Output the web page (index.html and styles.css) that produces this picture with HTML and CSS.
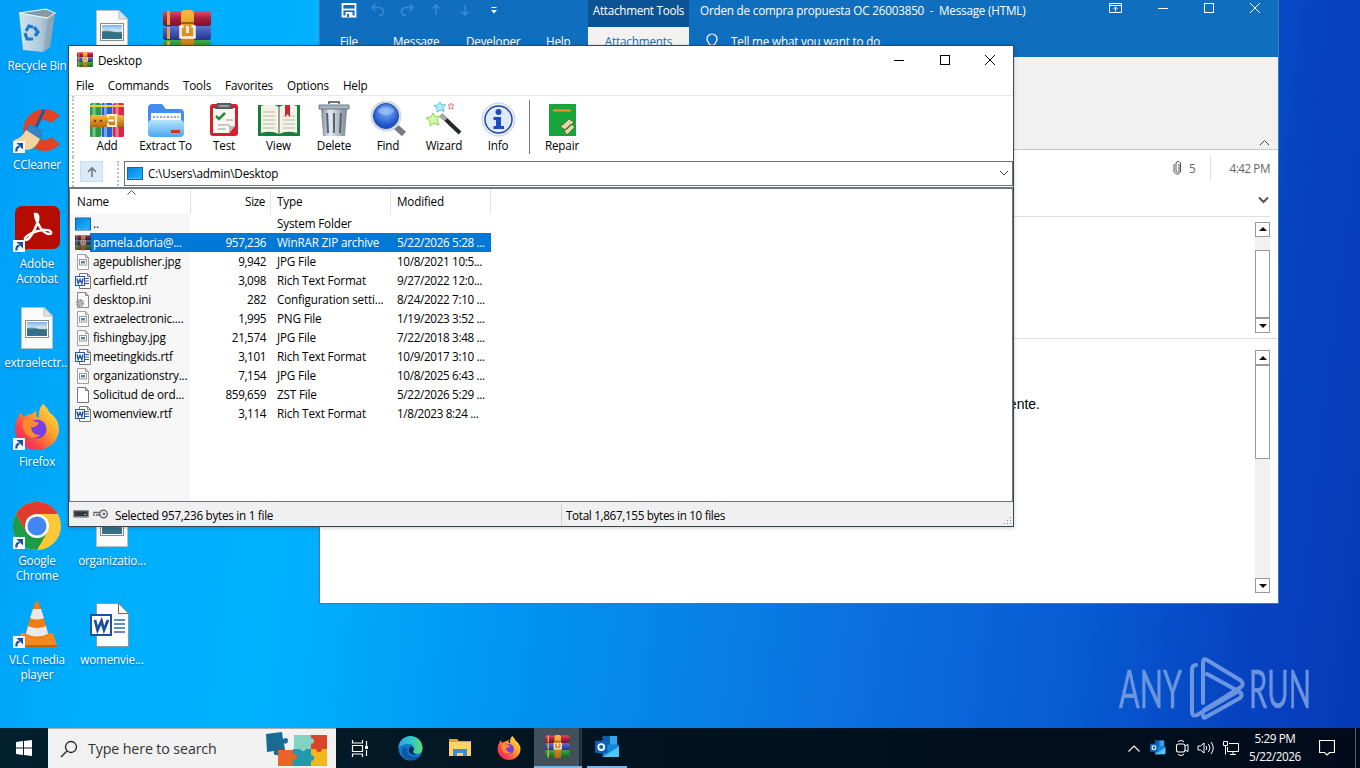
FILE: index.html
```html
<!DOCTYPE html>
<html lang="en">
<head>
<meta charset="utf-8">
<title>Desktop</title>
<link rel="stylesheet" href="styles.css">
</head>
<body>
<svg class="defs" width="0" height="0">
  <defs>
    <linearGradient id="gr" x1="0" y1="0" x2="0" y2="1"><stop offset="0" stop-color="#e0506a"/><stop offset=".5" stop-color="#a81c3c"/><stop offset="1" stop-color="#7c1230"/></linearGradient>
    <linearGradient id="gb" x1="0" y1="0" x2="0" y2="1"><stop offset="0" stop-color="#5a72d8"/><stop offset="1" stop-color="#26328a"/></linearGradient>
    <linearGradient id="gg" x1="0" y1="0" x2="0" y2="1"><stop offset="0" stop-color="#3cab48"/><stop offset="1" stop-color="#126824"/></linearGradient>
    <linearGradient id="belt" x1="0" y1="0" x2="0" y2="1"><stop offset="0" stop-color="#f8bd3c"/><stop offset="1" stop-color="#b8650f"/></linearGradient>
    <linearGradient id="folder" x1="0" y1="0" x2="0" y2="1"><stop offset="0" stop-color="#b6e4ff"/><stop offset="1" stop-color="#4aa8f2"/></linearGradient>
    <linearGradient id="metal"><stop offset="0" stop-color="#7e8a98"/><stop offset=".35" stop-color="#e6ebf0"/><stop offset="1" stop-color="#7b8795"/></linearGradient>
    <radialGradient id="lens" cx=".5" cy=".35"><stop offset="0" stop-color="#7fb2fa"/><stop offset="1" stop-color="#1c52c8"/></radialGradient>
    <linearGradient id="ff" x1="1" y1="0" x2="0" y2="1"><stop offset="0" stop-color="#fff04a"/><stop offset=".4" stop-color="#ffa22c"/><stop offset=".7" stop-color="#fb4548"/><stop offset="1" stop-color="#e01c7c"/></linearGradient>
    <linearGradient id="sea" x1="0" y1="0" x2="0" y2="1"><stop offset="0" stop-color="#78b4f0"/><stop offset=".45" stop-color="#d9edf2"/><stop offset=".55" stop-color="#3f7466"/><stop offset="1" stop-color="#417ca6"/></linearGradient>
    <linearGradient id="edge" x1="0" y1="0" x2="1" y2="0"><stop offset="0" stop-color="#2aa8e6"/><stop offset=".6" stop-color="#35c8c4"/><stop offset="1" stop-color="#62dc68"/></linearGradient>
    <linearGradient id="scr" x1="0" y1="0" x2="1" y2="1"><stop offset="0" stop-color="#0a84e0"/><stop offset="1" stop-color="#1fb4ff"/></linearGradient>
    <linearGradient id="bin" x1="0" y1="0" x2="1" y2="0"><stop offset="0" stop-color="#dce8f0"/><stop offset=".6" stop-color="#b9cbd8"/><stop offset="1" stop-color="#8aa2b4"/></linearGradient>
  </defs>
  <symbol id="rar" viewBox="0 0 48 48">
    <rect y="1" width="48" height="15" rx="2" fill="url(#gr)"/><rect y="16" width="48" height="14" rx="2" fill="url(#gb)"/><rect y="30" width="48" height="15" rx="2" fill="url(#gg)"/>
    <path d="M4 1h3v14H4zM4 17h3v12H4zM4 31h3v14H4z" fill="#e8a044"/>
    <path d="M18 4q0-4 4-4h5q4 0 4 4v42H18z" fill="url(#belt)"/><path d="M18 13h13" stroke="#8c4a08" stroke-width="1.500"/><path d="M20.500 16.500h-3v11h14v-11h-3" fill="none" stroke="#f6f0e4" stroke-width="2.500"/><path d="M24.500 16v7" stroke="#fff" stroke-width="2.500"/>
  </symbol>
  <symbol id="rarv" viewBox="0 0 34 34">
    <rect width="11" height="34" x="0" rx="1.500" fill="#2b9b40"/><rect x="11.500" width="11" height="34" rx="1.500" fill="#2564d0"/><rect x="23" width="11" height="34" rx="1.500" fill="#d92a4a"/>
    <path d="M4 0v34M15.500 0v34M27 0v34" stroke="#fff" stroke-opacity=".4" stroke-width="3"/><path d="M0 3h11M11.500 3h11M23 3h11" stroke="#f3cf34" stroke-width="2"/>
    <rect y="12" width="34" height="12" rx="2" fill="url(#belt)"/><path d="M18 15v-3h8v11h-8v-3" fill="none" stroke="#fbefd0" stroke-width="2.200"/><path d="M18 17.500h6" stroke="#fff" stroke-width="2"/><circle cx="5" cy="18" r="1.300" fill="#74400c"/><circle cx="11" cy="18" r="1.300" fill="#74400c"/>
  </symbol>
  <symbol id="pic" viewBox="0 0 32 42">
    <path d="M.5.500h22.500l8.500 8.500v32.500H.500z" fill="#fafafa" stroke="#b9bec2"/><path d="M23 .500v8.500h8.500z" fill="#dfe3e6" stroke="#b9bec2"/><rect x="4.500" y="13.500" width="23" height="17" fill="#fff" stroke="#8a8a8a"/><rect x="6" y="15" width="20" height="14" fill="url(#sea)"/><path d="M6 21q8-2 20 4v4H6z" fill="#2e6e8a" opacity=".7"/>
  </symbol>
  <symbol id="smallpic" viewBox="0 0 16 16"><path d="M2.500.500h8l3 3v12h-11z" fill="#fafafa" stroke="#a0a0a0"/><path d="M10.500.500v3h3" fill="none" stroke="#a0a0a0"/><rect x="4.500" y="5.500" width="7" height="5.500" fill="#fff" stroke="#999"/><path d="M6 7h4v2.500H6z" fill="#4d86ad"/></symbol>
  <symbol id="blank" viewBox="0 0 16 16"><path d="M2.500.500h8l3 3v12h-11z" fill="#fff" stroke="#777"/><path d="M10.500.500v3h3" fill="none" stroke="#777"/></symbol>
  <symbol id="ini" viewBox="0 0 16 16"><path d="M2.500.500h8l3 3v12h-11z" fill="#f8f8f8" stroke="#888"/><path d="M10.500.500v3h3" fill="none" stroke="#888"/><circle cx="5" cy="11" r="3" fill="#ddd" stroke="#888" stroke-width="2" stroke-dasharray="1.500 .8"/><circle cx="5" cy="11" r="1.300" fill="#fff" stroke="#888"/></symbol>
  <symbol id="smallword" viewBox="0 0 16 16"><path d="M4.500.500h8l3 3v12h-11z" fill="#fff" stroke="#777"/><path d="M12.500.500v3h3" fill="none" stroke="#777"/><path d="M10 5.500h4M10 8h4M10 10.500h4" stroke="#2a5cae"/><rect x=".5" y="3.500" width="9" height="9" fill="#fff" stroke="#2457a8"/><path d="M2 5.500l1.200 5 1.800-4 1.800 4 1.200-5" fill="none" stroke="#2457a8" stroke-width="1.500"/></symbol>
  <symbol id="word" viewBox="0 0 40 44"><path d="M6.500.500h22l10 10v33h-32z" fill="#fff" stroke="#8a9aa5"/><path d="M28.500.500v10h10" fill="none" stroke="#8a5a5a"/><path d="M24 17h11M24 21h11M24 25h11M24 29h11" stroke="#2a66b8" stroke-width="1.400"/><rect x="1" y="12" width="20" height="20" fill="#fff" stroke="#1c4f9e" stroke-width="2"/><path d="M5 17l2.500 10 4-9 2.500 9 4-10" fill="none" stroke="#1c4f9e" stroke-width="2.800"/></symbol>
  <symbol id="screen" viewBox="0 0 16 13"><rect x=".5" y=".5" width="15" height="12" fill="url(#scr)" stroke="#0a68b8"/><path d="M2 11.500h11" stroke="#8bd4ff" stroke-dasharray="1 1"/></symbol>
  <symbol id="arrow" viewBox="0 0 12 12"><rect width="12" height="12" fill="#f5f8fa"/><path d="M3.500 10.500c-.5-3 .5-4.500 3-5" stroke="#1b5199" stroke-width="2.200" fill="none"/><path d="M3.500 2h6.500v6.500z" fill="#1b5199"/></symbol>
  <symbol id="firefox" viewBox="0 0 46 46"><path d="M29 0q5 4 6 8 10 7 10 17A22 21 0 0 1 1 25Q1 17 5 12l1-4 4 5q3-3 8-3 3-3 5-3-2 4 0 6l2 1Q24 5 29 0z" fill="url(#ff)"/><circle cx="23" cy="25" r="9.500" fill="#7a3fe0"/><path d="M9 17q5-4 11 0l5 2q-3 5-8 4 1 9 10 8-9 6-15-1-4-5-3-13z" fill="#ff8a2c"/></symbol>
  <symbol id="outlook" viewBox="0 0 26 24"><rect x="8" y="0" width="15" height="18" rx="1" fill="#1b74cc"/><path d="M8 0h7.500v9H8z" fill="#0f5cab"/><path d="M15.500 0H23v9h-7.500z" fill="#35a4e8"/><path d="M8 9h17v12q0 1-1 1H8z" fill="#1487d8"/><path d="M25 11v10q0 1-1 1H8z" fill="#53c4f4"/><rect x="0" y="5" width="13" height="13" rx="1.500" fill="#0862b8"/><circle cx="6.500" cy="11.500" r="3.100" fill="none" stroke="#fff" stroke-width="1.900"/></symbol>
  <symbol id="min" viewBox="0 0 12 12"><path d="M1 6.500h10" stroke="currentColor"/></symbol>
  <symbol id="max" viewBox="0 0 12 12"><rect x="1.500" y="1.500" width="9" height="9" fill="none" stroke="currentColor"/></symbol>
  <symbol id="close" viewBox="0 0 12 12"><path d="M1 1l10 10M11 1L1 11" stroke="currentColor"/></symbol>
</svg>

<main class="desktop">
  <div class="item c1 r1"><svg class="ico" viewBox="0 0 48 48"><path d="M6 6l27-4 9 4-5 34-7 5-20-2z" fill="url(#bin)" opacity=".95"/><path d="M6 6l27-4 9 4-7 5z" fill="#8299a8" stroke="#eef6fa" stroke-width="1.200"/><path d="M35 11l7-5-5 34-7 5z" fill="#8ba0b0" opacity=".6"/><path d="M13 24l3-5 4 1M21 20l4 5-3 4M20 32h-6l-2-6" fill="none" stroke="#1878cc" stroke-width="3.200"/></svg><span>Recycle Bin</span></div>
  <div class="item c1 r2"><svg class="ico" viewBox="0 0 48 48"><path d="M47 10A21 21 0 1 0 47 38L38 31A10 10 0 1 1 38 17z" fill="#df4326"/><path d="M31 4l-9 20" stroke="#1d5a99" stroke-width="3"/><path d="M16 18l14 6-2 9-15-8z" fill="#3184c6"/><path d="M13 24l14 9q-4 10-13 11Q5 42 1 34q8-2 12-10z" fill="#f2d4a0"/></svg><svg class="cut"><use href="#arrow"/></svg><span>CCleaner</span></div>
  <div class="item c1 r3"><svg class="ico" viewBox="0 0 48 48"><rect x="2" y="1" width="45" height="43" rx="7" fill="#b60c00"/><path d="M22 9c4-1 4 5 2 10-3 8-8 16-11 16-4-1 3-8 17-10 9-1 10 4 6 4-6 0-13-11-14-20z" fill="none" stroke="#fff" stroke-width="2.400"/></svg><svg class="cut"><use href="#arrow"/></svg><span>Adobe<br>Acrobat</span></div>
  <div class="item c1 r4"><svg class="ico doc"><use href="#pic"/></svg><span>extraelectr...</span></div>
  <div class="item c1 r5"><svg class="ico fox"><use href="#firefox"/></svg><svg class="cut"><use href="#arrow"/></svg><span>Firefox</span></div>
  <div class="item c1 r6"><svg class="ico" viewBox="0 0 48 48"><circle cx="24" cy="24" r="24" fill="#fcc934"/><path d="M3.200 12A24 24 0 0 0 24 48L34.400 30 24 34 13.600 30z" fill="#1e9a48"/><path d="M3.200 12A24 24 0 0 1 44.800 12H24L13.600 30z" fill="#e23b2e"/><circle cx="24" cy="24" r="12" fill="#fff"/><circle cx="24" cy="24" r="9.500" fill="#4285f4"/></svg><svg class="cut"><use href="#arrow"/></svg><span>Google<br>Chrome</span></div>
  <div class="item c1 r7"><svg class="ico" viewBox="0 0 48 48"><path d="M8 32h32l4 13H4z" fill="#f48a1b"/><path d="M4 44h40v2H4z" fill="#c86206"/><path d="M22 2q2-3 4 0l10 32q-12 7-24 0z" fill="#f07c12"/><path d="M20 8h8l3 9q-7 3-14 0zM15 25q9 4 18 0l2 8q-11 5-22 0z" fill="#e9e9e9"/></svg><svg class="cut"><use href="#arrow"/></svg><span>VLC media<br>player</span></div>
  <div class="item c2 r1"><svg class="ico doc"><use href="#pic"/></svg></div>
  <div class="item c2 r6"><svg class="ico doc"><use href="#pic"/></svg><span>organizatio...</span></div>
  <div class="item c2 r7"><svg class="ico wordico"><use href="#word"/></svg><span>womenvie...</span></div>
  <div class="item c3 r1"><svg class="ico rarico"><use href="#rar"/></svg></div>

  <svg class="mark" viewBox="0 0 220 64">
    <text x="1" y="51" font-size="52" textLength="63" lengthAdjust="spacingAndGlyphs">ANY</text>
    <text x="131" y="51" font-size="52" textLength="62" lengthAdjust="spacingAndGlyphs">RUN</text>
    <g fill="none" stroke-width="4" stroke-linejoin="round" stroke-linecap="round"><path d="M78 8q-4 0-4 5v42q0 5 5 3l40-23"/><path d="M85 46V5q0-4 4-2l33 20q5 3 1 7L86 53"/><path d="M89 17l33 18q3 3 0 6L88 60q-3 2-3-2"/></g>
  </svg>

  <section class="mail">
    <header class="mail-head">
      <div class="mail-title">
        <div class="quick">
          <svg width="16" height="16" viewBox="0 0 16 16"><path d="M1.500 2h13v12.500h-13z" fill="none" stroke="#fff" stroke-width="1.800"/><path d="M2 7.500h12" stroke="#fff" stroke-width="1.800"/><path d="M4.500 10h7v5h-7z" fill="#fff"/><path d="M6 12h2v3H6z" fill="#106ebe"/></svg>
          <svg class="dim" viewBox="0 0 16 16"><path d="M5.500 2L2 5.500 5.500 9M2 5.500h7.500q4 .5 4 4t-4.500 4"/></svg>
          <svg class="dim" viewBox="0 0 16 16"><path d="M10.500 2L14 5.500 10.500 9M14 5.500H6.500q-4 .5-4 4t4.500 4"/></svg>
          <svg class="dim" viewBox="0 0 16 16"><path d="M8 13V3M4.500 6.500L8 3l3.500 3.500"/></svg>
          <svg class="dim" viewBox="0 0 16 16"><path d="M8 3v10M4.500 9.500L8 13l3.500-3.500"/></svg>
          <svg viewBox="0 0 16 16" width="16" height="16"><path d="M5.500 5.500h5" stroke="#fff"/><path d="M5 8h6l-3 3.500z" fill="#fff"/></svg>
        </div>
        <div class="context">Attachment Tools</div>
        <div class="subject">Orden de compra propuesta OC 26003850&nbsp; -&nbsp; Message (HTML)</div>
        <div class="mail-buttons"><svg viewBox="0 0 14 12" width="14" height="12"><path d="M.5 1.500h12v9H.500zM.5 3.500h12M6.500 9.500V5M4.500 7l2-2 2 2" fill="none" stroke="#fff"/></svg><svg><use href="#min"/></svg><svg><use href="#max"/></svg><svg><use href="#close"/></svg></div>
      </div>
      <nav class="tabs"><span>File</span><span>Message</span><span>Developer</span><span>Help</span><span class="on">Attachments</span><svg width="12" height="16" viewBox="0 0 12 16"><path d="M3.500 12c0-2-2.500-3-2.500-6a5 5 0 0 1 10 0c0 3-2.500 4-2.500 6zM4 14h4" fill="none" stroke="#fff" stroke-width="1.200"/></svg><span class="tell">Tell me what you want to do</span></nav>
    </header>
    <div class="ribbon"><svg width="11" height="7" viewBox="0 0 11 7"><path d="M1 6l4.500-4.500L10 6" fill="none" stroke="#444"/></svg></div>
    <div class="meta">
      <div class="meta-row"><svg width="9" height="16" viewBox="0 0 9 16"><path d="M6 4v7.500q-1.500 2-3 0V3q2-3.500 4.500 0v9q-3 4.500-6.500 0V4" fill="none" stroke="#555"/></svg><span class="count">5</span><span class="time">4:42 PM</span></div>
      <svg class="more" width="11" height="8" viewBox="0 0 11 8"><path d="M1 1.500L5.500 6 10 1.500" fill="none" stroke="#555" stroke-width="2"/></svg>
    </div>
    <div class="attach"><div class="bar"><i class="up"></i><b class="t1"></b><i class="down"></i></div></div>
    <div class="body"><p>Favor de confirmar la orden de compra propuesta adjunta lo antes posible, atentamente.</p><div class="bar"><i class="up"></i><b class="t2"></b><i class="down"></i></div></div>
  </section>

  <section class="win">
    <header class="win-title"><svg width="16" height="16"><use href="#rar"/></svg><span>Desktop</span><div class="win-buttons"><svg><use href="#min"/></svg><svg><use href="#max"/></svg><svg><use href="#close"/></svg></div></header>
    <nav class="menu"><span>File</span><span>Commands</span><span>Tools</span><span>Favorites</span><span>Options</span><span>Help</span></nav>
    <div class="tools">
      <div class="tool"><svg width="34" height="34"><use href="#rarv"/></svg>Add</div>
      <div class="tool"><svg width="36" height="34" viewBox="0 0 36 34"><path d="M0 5q0-4 4-4h10l4 5h14q4 0 4 4v20H0z" fill="#458cf0"/><path d="M3 10h30v12H3z" fill="#f8fbff"/><path d="M5 14h26" stroke="#9fa9b4" stroke-width="2" stroke-dasharray="2 1.500"/><rect y="17" width="36" height="17" rx="4" fill="url(#folder)"/><path d="M23 28.500h9" stroke="#dc3030" stroke-width="3"/></svg>Extract To</div>
      <div class="tool"><svg width="28" height="34" viewBox="0 0 28 34"><rect y="1" width="28" height="32" rx="3" fill="#d3202c"/><path d="M3 5h22v18l-6 7H3z" fill="#f8f8f3"/><path d="M19 30v-7h6z" fill="#bbb"/><path d="M7 0h14l2 6H5z" fill="#555b60"/><path d="M9 3h10" stroke="#ddd"/><path d="M6 13l3 3 6-6" stroke="#258b3b" stroke-width="2.500" fill="none"/><path d="M16 17h7M8 22h12M8 26h8" stroke="#999"/></svg>Test</div>
      <div class="tool"><svg width="42" height="34" viewBox="0 0 42 34"><path d="M0 2h42v31H0z" fill="#14803c"/><path d="M3 3q10-4 18 1 8-5 18-1v27q-10-3-18 1-8-4-18-1z" fill="#f5f2e6"/><path d="M21 4v27" stroke="#7d897b" stroke-width="1.500"/><path d="M5 9h12M5 13h12M5 17h12M5 21h12M5 25h12M25 13h12M25 17h12M25 21h12M25 25h12" stroke="#b9b9ad"/><path d="M27 2h5v12l-2.500-3L27 14z" fill="#ce2434"/></svg>View</div>
      <div class="tool"><svg width="32" height="36" viewBox="0 0 32 36"><path d="M11 3V1h10v2" fill="none" stroke="#6c7580" stroke-width="2"/><path d="M3 8h26l-2 27H5z" fill="url(#metal)"/><path d="M1 4h30v4H1z" fill="#a8b4c1" stroke="#6d7986"/><path d="M9 12l1 20M16 12v20M23 12l-1 20" stroke="#566473" stroke-width="2"/></svg>Delete</div>
      <div class="tool"><svg width="37" height="36" viewBox="0 0 37 36"><path d="M25 25l9 8" stroke="#777c82" stroke-width="6"/><circle cx="16" cy="15" r="14" fill="url(#lens)" stroke="#d2dbe5" stroke-width="3"/><circle cx="16" cy="15" r="12.500" fill="none" stroke="#1f489d"/><ellipse cx="16" cy="10" rx="8" ry="4" fill="#bbd9ff" opacity=".45"/></svg>Find</div>
      <div class="tool"><svg width="36" height="36" viewBox="0 0 36 36"><path d="M15 14l19 18" stroke="#24272c" stroke-width="4"/><path d="M15 14l5 4.500" stroke="#aaa" stroke-width="4"/><path d="M7 12l2 4 5-1-3 4 2 5-5-2-4 3v-5l-4-3 5-1z" fill="#d8f8ae" stroke="#86d848"/><path d="M14 1l1.500 3 4-.5-2.500 3 1 4-3.500-1.500-3.500 2V7L8 4.500l4-.5z" fill="#b0ecfa" stroke="#58c6e6"/><path d="M25 2l.8 1.800 2.200.2-1.500 1.500.5 2.500-2-1-2 1 .5-2.500L22 4l2.200-.2z" fill="none" stroke="#ee7883"/></svg>Wizard</div>
      <div class="tool"><svg width="35" height="35" viewBox="0 0 35 35"><circle cx="17.500" cy="17.500" r="16.500" fill="#e8eef8" stroke="#c5d2e5"/><circle cx="17.500" cy="17.500" r="13.500" fill="#dfe9fa" stroke="#214b9e" stroke-width="1.500"/><circle cx="17.500" cy="10" r="3" fill="#1d4dbd"/><path d="M12.500 15h7.500v9h3v3H12.500v-3H15v-6h-2.500z" fill="#1d4dbd"/></svg>Info</div>
      <div class="sep"></div>
      <div class="tool"><svg width="27" height="34" viewBox="0 0 27 34"><path d="M0 1h27v32H0z" fill="#18a53c"/><path d="M4 7.500h18" stroke="#f09732" stroke-width="2"/><path d="M11 24l9-8 5 3-8 8zM15 28l7-7 4 3-8 8z" fill="#dfd5a6" stroke="#4e7134"/></svg>Repair</div>
    </div>
    <div class="address"><div class="upbtn"><svg width="12" height="12" viewBox="0 0 12 12"><path d="M6 11V2M2 6l4-4 4 4" fill="none" stroke="#6f7880" stroke-width="1.600"/></svg></div><i class="dots"></i><div class="path"><svg width="16" height="13"><use href="#screen"/></svg><span>C:\Users\admin\Desktop</span><svg class="drop" width="10" height="7" viewBox="0 0 10 7"><path d="M1 1l4 4 4-4" fill="none" stroke="#444"/></svg></div></div>
    <div class="list">
      <div class="row head"><span class="name">Name<svg class="sort" width="9" height="5" viewBox="0 0 9 5"><path d="M.5 4.500l4-4 4 4" fill="none" stroke="#555"/></svg></span><span>Size</span><span>Type</span><span>Modified</span></div>
      <div class="row"><span><svg><use href="#screen"/></svg>..</span><span></span><span>System Folder</span><span></span></div>
      <div class="row sel"><span><svg><use href="#rar"/></svg>pamela.doria@...</span><span>957,236</span><span>WinRAR ZIP archive</span><span>5/22/2026 5:28 ...</span></div>
      <div class="row"><span><svg><use href="#smallpic"/></svg>agepublisher.jpg</span><span>9,942</span><span>JPG File</span><span>10/8/2021 10:5...</span></div>
      <div class="row"><span><svg><use href="#smallword"/></svg>carfield.rtf</span><span>3,098</span><span>Rich Text Format</span><span>9/27/2022 12:0...</span></div>
      <div class="row"><span><svg><use href="#ini"/></svg>desktop.ini</span><span>282</span><span>Configuration setti...</span><span>8/24/2022 7:10 ...</span></div>
      <div class="row"><span><svg><use href="#smallpic"/></svg>extraelectronic....</span><span>1,995</span><span>PNG File</span><span>1/19/2023 3:52 ...</span></div>
      <div class="row"><span><svg><use href="#smallpic"/></svg>fishingbay.jpg</span><span>21,574</span><span>JPG File</span><span>7/22/2018 3:48 ...</span></div>
      <div class="row"><span><svg><use href="#smallword"/></svg>meetingkids.rtf</span><span>3,101</span><span>Rich Text Format</span><span>10/9/2017 3:10 ...</span></div>
      <div class="row"><span><svg><use href="#smallpic"/></svg>organizationstry...</span><span>7,154</span><span>JPG File</span><span>10/8/2025 6:43 ...</span></div>
      <div class="row"><span><svg><use href="#blank"/></svg>Solicitud de ord...</span><span>859,659</span><span>ZST File</span><span>5/22/2026 5:29 ...</span></div>
      <div class="row"><span><svg><use href="#smallword"/></svg>womenview.rtf</span><span>3,114</span><span>Rich Text Format</span><span>1/8/2023 8:24 ...</span></div>
      <div class="rest"></div>
    </div>
    <footer class="status"><div class="status-icons"><svg width="16" height="8" viewBox="0 0 16 8"><rect x=".5" y=".5" width="15" height="6.500" rx="1" fill="#32383e" stroke="#8d949a" stroke-width="1.500"/><path d="M11 4.500h2" stroke="#7bd37e"/></svg><svg width="16" height="10" viewBox="0 0 16 10"><circle cx="11.500" cy="5" r="3.800" fill="#ddd" stroke="#666" stroke-width="1.300"/><circle cx="12" cy="5" r="1" fill="#444"/><path d="M8 3.500H1M8 6H4M1 6h2" stroke="#666" stroke-width="1.500"/></svg></div><div class="s1">Selected 957,236 bytes in 1 file</div><div class="s2">Total 1,867,155 bytes in 10 files</div><svg class="grip" width="10" height="10" viewBox="0 0 10 10"><path d="M8 1h1v1H8zM5 4h1v1H5zM8 4h1v1H8zM2 7h1v1H2zM5 7h1v1H5zM8 7h1v1H8z" fill="#888"/></svg></footer>
  </section>
</main>

<footer class="taskbar">
  <div class="start"><svg width="16" height="16" viewBox="0 0 16 16"><path d="M0 2l7-1v6.500H0zM8 1l8-1v7.500H8zM0 8.500h7V15l-7-1zM8 8.500h8V16l-8-1z" fill="#fff"/></svg></div>
  <div class="search"><svg width="18" height="18" viewBox="0 0 18 18"><circle cx="11" cy="7" r="5.500" fill="none" stroke="#222" stroke-width="1.300"/><path d="M7 11l-6 6" stroke="#222" stroke-width="1.300"/></svg><span>Type here to search</span>
    <svg class="puzzle" width="64" height="36" viewBox="0 0 64 36"><path d="M1 3l16-2 1 7q5-3 5 2-1 4-4 2l1 7-6 1q1 5-3 4-3 0-2-4l-7 1z" fill="#176b94"/><path d="M13 19h17v16H13z" fill="#e8642b"/><path d="M29 4h17v14H29z" fill="#84d3c2"/><path d="M46 4h16v14H46z" fill="#db4428"/><path d="M28 18h18v17H28z" fill="#219aab"/><path d="M46 18h16v17H46z" fill="#f3b71e"/><circle cx="38" cy="17" r="3" fill="#84d3c2"/><circle cx="46" cy="10" r="3" fill="#84d3c2"/><circle cx="29" cy="26" r="3" fill="#e8642b"/><circle cx="54" cy="18" r="3" fill="#db4428"/><circle cx="46" cy="27" r="3" fill="#219aab"/></svg>
  </div>
  <div class="apps">
    <div class="app"><svg width="18" height="17" viewBox="0 0 18 17"><path d="M1.500 0v3h10V0M1.500 17v-3h10v3M1.500 5.500h10v6h-10zM15.500 1v5M15.500 10v6" fill="none" stroke="#fff" stroke-width="1.200"/><path d="M14 6h3v3h-3z" fill="#fff"/></svg></div>
    <div class="app"><svg width="25" height="25" viewBox="0 0 25 25"><circle cx="12.500" cy="12.500" r="12" fill="#1676c8"/><path d="M.5 12A12 12 0 0 1 24.500 12q0 6-7 6-4 0-3-3 2-2 1-4-2-4-7-3Q2 9 .5 12z" fill="url(#edge)"/><path d="M9 12q-1 9 9 9 3 0 5-2-5 6-11 5-9-2-8-10 2-4 5-2z" fill="#0d55a5"/><path d="M11 12q3-3 5 0 1 2-1 3 0 3 4 3-5 2-8-2z" fill="#082d55"/></svg></div>
    <div class="app"><svg width="22" height="20" viewBox="0 0 22 20"><path d="M0 1h8l2 2h12v5H0z" fill="#e6a42c"/><path d="M0 4h22v14H0z" fill="#fbd667"/><path d="M4 18v-7h14v7h-4v-3H8v3z" fill="#3b91ce"/></svg></div>
    <div class="app"><svg width="24" height="24"><use href="#firefox"/></svg></div>
    <div class="app active"><svg width="25" height="24"><use href="#rar"/></svg></div>
    <div class="app open"><svg width="25" height="23"><use href="#outlook"/></svg></div>
  </div>
  <div class="tray">
    <svg width="12" height="7" viewBox="0 0 12 7"><path d="M.5 6.500L6 1l5.500 5.500" fill="none" stroke="#fff" stroke-width="1.200"/></svg>
    <svg class="tray-mail" width="16" height="16"><use href="#outlook"/></svg>
    <svg width="14" height="18" viewBox="0 0 14 18"><path d="M3 2.500q3-2 6 0M3 15.500q3 2 6 0M10 7l3-1.500v7L10 11" fill="none" stroke="#fff" stroke-width="1"/><rect x="1.500" y="5" width="8.500" height="8" rx="2" fill="none" stroke="#fff" stroke-width="1.100"/></svg>
    <svg width="17" height="14" viewBox="0 0 17 14"><path d="M1 5v4h2.500L7 12V2L3.500 5zM9 5q1.500 2 0 4M11.500 3q3 4 0 8M14 1q4.500 6 0 12" fill="none" stroke="#fff"/></svg>
    <svg width="16" height="14" viewBox="0 0 16 14"><path d="M6 2.500h9.500v8H4.500V6M7 13.500h6M10 10.500v3" fill="none" stroke="#fff"/><path d="M.5.500h4v4h-4zM2.500 4.500v9" fill="none" stroke="#fff"/></svg>
    <div class="clock">5:29 PM<br>5/22/2026</div>
    <svg width="16" height="16" viewBox="0 0 16 16"><path d="M.5.500h15v12h-5L8 15l-2.500-2.500h-5z" fill="none" stroke="#fff" stroke-width="1.200"/></svg>
    <i class="peek"></i>
  </div>
</footer>
</body>
</html>
```
FILE: styles.css
```css
* { box-sizing: border-box; }
body { margin: 0; width: 1360px; height: 768px; overflow: hidden; font: 11.7px/15px "Open Sans", "Noto Sans", sans-serif; letter-spacing: -.17px; color: #000; }
svg { display: block; flex: none; }
.defs { position: absolute; }
.desktop { position: relative; height: 728px; overflow: hidden; background: linear-gradient(97deg, #009ff8 0, #00aefd 12%, #00b2ff 24%, #0096f3 40%, #0b72e0 63%, #075bd2 80%, #0642c0 92%, #053ab8 100%); }

/* Desktop shortcuts */
.item { position: absolute; width: 74px; display: flex; flex-direction: column; align-items: center; gap: 3px; color: #fff; text-align: center; text-shadow: 0 1px 2px #0058a0; white-space: nowrap; }
.c1 { left: 0; } .c2 { left: 75px; } .c3 { left: 150px; }
.r1 { top: 7px; } .r2 { top: 106px; } .r3 { top: 205px; } .r4 { top: 304px; } .r5 { top: 403px; } .r6 { top: 502px; } .r7 { top: 601px; }
.ico { width: 48px; height: 48px; }
.doc { height: 42px; margin: 3px 0; }
.fox { height: 46px; margin: 1px 0; }
.rarico { margin-top: 3px; }
.wordico { width: 40px; height: 44px; margin: 2px 5px 2px 0; }
.cut { position: absolute; left: 13px; top: 35px; width: 12px; height: 12px; }
.mark { position: absolute; left: 1118px; top: 657px; width: 220px; height: 64px; overflow: visible; fill: #7da3e3; stroke: #7da3e3; opacity: .85; font-family: Lato, sans-serif; font-weight: 400; letter-spacing: 0; }
.mark text { stroke-width: .5px; }

/* Message window */
.mail { position: absolute; left: 319px; top: 0; width: 960px; height: 604px; display: flex; flex-direction: column; background: #fff; border: 1px solid #3f79b5; border-top: 0; }
.mail-head { height: 57px; background: #106ebe; color: #fff; }
.mail-title { height: 27px; display: flex; }
.quick { width: 268px; padding: 2px 0 0 21px; display: flex; gap: 13px; }
.dim { width: 16px; height: 16px; fill: none; stroke: #3889d2; stroke-width: 1.6; }
.context { width: 101px; background: #0b5394; text-align: center; line-height: 20px; letter-spacing: -.28px; }
.subject { padding-left: 11px; line-height: 21px; width: 410px; white-space: nowrap; letter-spacing: -.2px; }
.mail-buttons { display: flex; gap: 34px; padding-top: 2px; margin-left: 10px; }
.mail-buttons svg { width: 12px; height: 12px; }
.mail-buttons svg:first-child { width: 14px; }
.tabs { height: 30px; display: flex; line-height: 29px; }
.tabs span { white-space: nowrap; }
.tabs span:nth-child(1) { width: 73px; padding-left: 20px; }
.tabs span:nth-child(2) { width: 73px; }
.tabs span:nth-child(3) { width: 80px; }
.tabs span:nth-child(4) { width: 42px; }
.tabs .on { width: 101px; background: #f3f2f1; color: #106ebe; text-align: center; }
.tabs svg { margin: 6px 13px 0 17px; }
.ribbon { height: 93px; background: #f1f1f1; border-bottom: 1px solid #c8c8c8; display: flex; justify-content: flex-end; align-items: flex-end; padding: 0 8px 3px; }
.meta { height: 67px; margin-right: 8px; border-bottom: 1px solid #ddd; display: flex; flex-direction: column; align-items: flex-end; padding-top: 6px; }
.meta-row { display: flex; align-items: center; color: #666; height: 24px; }
.count { padding: 0 15px 0 7px; border-right: 1px solid #ddd; line-height: 22px; }
.time { padding-left: 18px; letter-spacing: -.45px; }
.more { margin: 16px 1px 0 0; }
.attach { height: 122px; border-bottom: 1px solid #ddd; display: flex; justify-content: flex-end; padding: 5px 8px 5px; }
.body { flex: 1; display: flex; justify-content: flex-end; padding: 11px 8px 10px; font: 14px/16px "Liberation Sans", Arial, sans-serif; letter-spacing: 0; }
.body p { margin: 46px 215px 0 0; white-space: nowrap; }
.bar { width: 15px; display: flex; flex-direction: column; justify-content: space-between; background: #f1f1f1; }
.bar i { height: 15px; border: 1px solid #999; background: #fff; display: flex; justify-content: center; align-items: center; }
.bar i::after { content: ""; border: 4px solid transparent; }
.up::after { border-bottom-color: #111 !important; border-top: 0 !important; }
.down::after { border-top-color: #111 !important; border-bottom: 0 !important; }
.bar b { border: 1px solid #999; background: #fff; }
.t1 { height: 69px; margin-top: 13px; }
.t2 { height: 94px; margin-bottom: auto; }

/* Archive manager window */
.win { position: absolute; left: 68px; top: 45px; width: 946px; height: 482px; display: flex; flex-direction: column; background: #fff; border: 1px solid #3c4650; box-shadow: 0 1px 4px #0003; }
.win-title { height: 30px; display: flex; align-items: center; padding: 0 0 2px 8px; }
.win-title span { margin-left: 5px; }
.win-buttons { margin: 0 17px 0 auto; display: flex; gap: 33.500px; }
.win-buttons svg { width: 12px; height: 12px; }
.menu { height: 20px; border-bottom: 1px solid #e8e8e8; display: flex; gap: 14px; padding-left: 7px; line-height: 18px; }
.tools { height: 61px; display: grid; grid-template-columns: 56px 60px 58px 50px 62px 46px 66px 42px 20px 46px; padding: 6px 0 0 5px; margin-left: 3px; border-left: 2px dotted #bbc5c0; }
.tool { display: flex; flex-direction: column; justify-content: flex-end; align-items: center; gap: 1px; height: 51px; white-space: nowrap; }
.tool:nth-child(2), .tool:nth-child(4) { padding-left: 1px; }
.sep { border-left: 1px solid #777; margin: -2px 0 0 10px; height: 54px; }
.address { height: 30px; display: flex; margin-left: 3px; padding: 4px 0 1px; border-left: 2px dotted #bbc5c0; }
.upbtn { width: 23px; height: 21px; margin-left: 6px; background: #d9eaf8; border: 1px solid #c5dff2; display: grid; place-items: center; }
.dots { width: 21px; border-right: 2px dotted #bbc5c0; margin: 0 5px 0 -5px; }
.path { flex: 1; height: 25px; border: 1px solid #707070; display: flex; align-items: center; padding: 0 3px 0 2px; }
.path span { margin-left: 5px; }
.drop { margin-left: auto; }
.list { height: 315px; border: 1px solid #70757b; border-top-width: 2px; display: flex; flex-direction: column; }
.row { display: grid; grid-template-columns: 121px 80px 120px 100px; height: 19px; width: 421px; line-height: 19px; white-space: nowrap; }
.row > span { display: flex; align-items: center; padding-left: 6px; }
.row > span:nth-child(2) { justify-content: flex-end; padding-right: 5px; letter-spacing: -.38px; }
.row:not(.head) > span:nth-child(4) { letter-spacing: -.33px; }
.row:not(.head) > span:first-child { background: linear-gradient(90deg, #f6f6f6 120px, transparent 120px); padding-left: 5px; }
.row svg:not(.sort) { width: 16px; height: 16px; margin-right: 2px; }
.head { height: 25px; line-height: 25px; }
.head > span { border-right: 1px solid #e3e3e3; }
.head > span:nth-child(1) { padding-left: 7px; position: relative; }
.sort { position: absolute; left: 57px; top: 1px; }
.sel { color: #fff; background: #0078d7; }
.row.sel > span:first-child { background: linear-gradient(90deg, #f6f6f6 20px, #0078d7 20px); }
.sel svg { filter: brightness(.75) hue-rotate(-25deg) saturate(.6); }
.rest { flex: 1; width: 120px; background: #f6f6f6; }
.status { flex: 1; background: #f0f0f0; display: flex; align-items: center; padding: 2px 0 0 4px; }
.status-icons { display: flex; align-items: center; gap: 3px; width: 42px; padding-bottom: 2px; }
.s1 { width: 447px; border-right: 1px solid #d4d4d4; line-height: 22px; letter-spacing: -.27px; }
.s2 { padding-left: 4px; letter-spacing: -.33px; }
.grip { margin: auto 1px 0 auto; }

/* Taskbar */
.taskbar { height: 40px; display: flex; background: linear-gradient(90deg, #03202f, #021521 40%, #020b1b); color: #fff; }
.start { width: 48px; display: grid; place-items: center; }
.search { width: 288px; background: #f1f1f1; color: #333; display: flex; align-items: center; padding: 0 7px 0 12px; font-size: 14.200px; border-top: 1px solid #aaa; }
.search span { margin-left: 10px; white-space: nowrap; letter-spacing: -.1px; }
.puzzle { margin-left: auto; }
.apps { display: flex; }
.app { width: 49px; display: grid; place-items: center; }
.app:first-child { width: 50px; padding-right: 2px; }
.app.active { width: 48px; padding-right: 1px; margin: 0 2px 0 0; background: linear-gradient(90deg, #40515c 45px, #152937 45px, #2b3d49); border-bottom: 2px solid #76b9ed; }
.app.open { width: 40px; margin-left: 3px; border-bottom: 2px solid #76b9ed; }
.app:nth-child(4) { width: 50px; }
.tray { margin-left: auto; display: flex; align-items: center; gap: 8.500px; }
.tray-mail { margin-left: 2px; }
.clock { width: 56px; margin: -2px 7px 0 0; text-align: center; line-height: 18px; letter-spacing: -.4px; }
.peek { height: 40px; width: 5px; border-left: 1px solid #53606c; margin-left: 12px; }
```
